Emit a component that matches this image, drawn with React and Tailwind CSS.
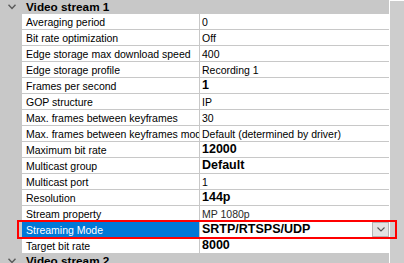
import React from "react";

const rows = [
  ["Averaging period", "0", false],
  ["Bit rate optimization", "Off", false],
  ["Edge storage max download speed", "400", false],
  ["Edge storage profile", "Recording 1", false],
  ["Frames per second", "1", true],
  ["GOP structure", "IP", false],
  ["Max. frames between keyframes", "30", false],
  ["Max. frames between keyframes mode", "Default (determined by driver)", false],
  ["Maximum bit rate", "12000", true],
  ["Multicast group", "Default", true],
  ["Multicast port", "1", false],
  ["Resolution", "144p", true],
  ["Stream property", "MP 1080p", false],
  ["Streaming Mode", "SRTP/RTSPS/UDP", true, true],
  ["Target bit rate", "8000", true],
];

function Chevron() {
  return (
    <svg width="8" height="6" viewBox="0 0 8 6" className="block">
      <polyline points="0.5,0.8 4,4.5 7.5,0.8" fill="none" stroke="#5a5a5a" strokeWidth="1.4" />
    </svg>
  );
}

function Header({ title }) {
  return (
    <div className="flex h-[14px] shrink-0 items-center bg-[#c8c8c8]">
      <div className="flex w-[22px] justify-center pl-[1px]">
        <Chevron />
      </div>
      <div className="pl-[4px] text-[11.75px] font-bold leading-none text-black">{title}</div>
    </div>
  );
}

function Row({ label, value, bold, selected }) {
  return (
    <div className="flex h-[16px] shrink-0">
      <div className="w-[22px] bg-[#c8c8c8]" />
      <div
        className={
          "flex w-[178px] items-center overflow-hidden whitespace-nowrap border-b border-r border-[#c8c8c8] pl-[4px] pt-[1px] text-[10.5px] leading-none " +
          (selected ? "bg-[#0078d7] text-white" : "bg-white text-black")
        }
      >
        {label}
      </div>
      <div className="flex flex-1 items-center overflow-hidden whitespace-nowrap border-b border-[#c8c8c8] bg-white pl-[2px] leading-none">
        <span
          className={
            bold
              ? "flex-1 text-[12.5px] font-bold text-black"
              : "flex-1 pt-[1px] text-[10.5px] " + (value === "MP 1080p" ? "text-[#2a2a2a]" : "text-black")
          }
        >
          {value}
        </span>
        {selected && (
          <div className="flex h-[15px] w-[17px] items-center justify-center border border-[#b4b4b4] bg-[#e3e3e3]">
            <svg width="8" height="5" viewBox="0 0 8 5" className="block">
              <polyline points="0.5,0.5 4,4 7.5,0.5" fill="none" stroke="#555" strokeWidth="1.1" />
            </svg>
          </div>
        )}
      </div>
    </div>
  );
}

export default function App() {
  return (
    <div className="relative flex h-[263px] w-[404px] overflow-hidden bg-white font-['Liberation_Sans',Arial,sans-serif]">
      <div className="flex w-[389px] flex-col">
        <Header title="Video stream 1" />
        {rows.map(([l, v, b, s]) => (
          <Row key={l} label={l} value={v} bold={b} selected={s} />
        ))}
        <Header title="Video stream 2" />
      </div>
      <div className="w-[1px] bg-white" />
      <div className="mt-[1px] w-[14px] bg-[#cdcdcd]" />
      <div className="absolute left-[17px] top-[220px] h-[19px] w-[380px] border-2 border-[#ff0000]" />
    </div>
  );
}
